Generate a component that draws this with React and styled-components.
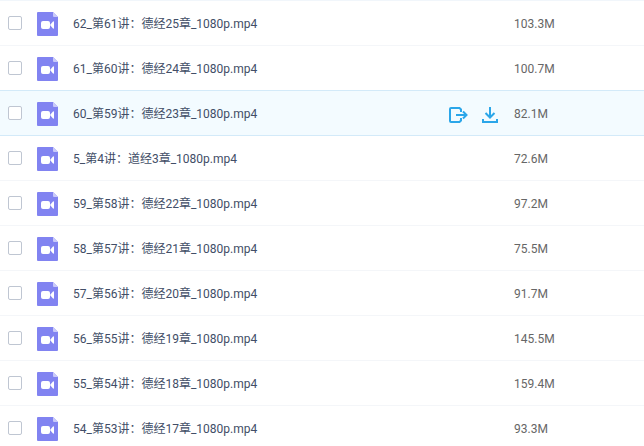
import React from 'react'
import styled, { createGlobalStyle } from 'styled-components'

const files = [
  { name: '62_第61讲：德经25章_1080p.mp4', size: '103.3M' },
  { name: '61_第60讲：德经24章_1080p.mp4', size: '100.7M' },
  { name: '60_第59讲：德经23章_1080p.mp4', size: '82.1M', active: true },
  { name: '5_第4讲：道经3章_1080p.mp4', size: '72.6M' },
  { name: '59_第58讲：德经22章_1080p.mp4', size: '97.2M' },
  { name: '58_第57讲：德经21章_1080p.mp4', size: '75.5M' },
  { name: '57_第56讲：德经20章_1080p.mp4', size: '91.7M' },
  { name: '56_第55讲：德经19章_1080p.mp4', size: '145.5M' },
  { name: '55_第54讲：德经18章_1080p.mp4', size: '159.4M' },
  { name: '54_第53讲：德经17章_1080p.mp4', size: '93.3M' },
]

const VideoIcon = () => (
  <svg width="21" height="24" viewBox="0 0 21 24" aria-hidden="true">
    <path d="M1 0H16l5 5v18a1 1 0 0 1-1 1H1a1 1 0 0 1-1-1V1a1 1 0 0 1 1-1z" fill="#8183f1" />
    <path d="M16 0l5 5h-4a1 1 0 0 1-1-1z" fill="#c9caf9" />
    <rect x="4" y="9" width="9" height="8" rx="2" fill="#fff" />
    <path d="M13 13l3-3.500q1-.5 1 .5v6q0 1-1 .5z" fill="#fff" />
  </svg>
)

const ShareIcon = () => (
  <svg width="19" height="16" viewBox="0 0 19 16" fill="none" stroke="#2ba6e9" strokeWidth="2" aria-hidden="true">
    <path d="M12 5V2.500L10.500 1H2a1 1 0 0 0-1 1v12a1 1 0 0 0 1 1h8.500l1.500-1.500V11" />
    <path d="M7 8h10M14 4.500L17.500 8 14 11.500" />
  </svg>
)

const DownloadIcon = () => (
  <svg width="16" height="16" viewBox="0 0 16 16" fill="none" stroke="#2ba6e9" strokeWidth="2" aria-hidden="true">
    <path d="M8 0v10M3.500 6L8 10.500 12.500 6M1 12v3h14v-3" />
  </svg>
)

const App = () => {
  return (
    <>
      <GlobalStyle />
      <FileTable>
        <tbody>
          {files.map((file) => (
            <FileRow key={file.name} $active={file.active}>
              <CheckCell>
                <Checkbox type="checkbox" aria-label={file.name} />
              </CheckCell>
              <NameCell>
                <NameWrap>
                  <VideoIcon />
                  <FileName href="#">{file.name}</FileName>
                  {file.active && (
                    <Actions>
                      <ActionButton aria-label="分享"><ShareIcon /></ActionButton>
                      <ActionButton aria-label="下载"><DownloadIcon /></ActionButton>
                    </Actions>
                  )}
                </NameWrap>
              </NameCell>
              <SizeCell>
                <SizeText>{file.size}</SizeText>
              </SizeCell>
            </FileRow>
          ))}
        </tbody>
      </FileTable>
    </>
  )
}

export default App

const GlobalStyle = createGlobalStyle`
  body {
    margin: 0;
    background: #fff;
    font-family: Roboto, "Noto Sans CJK SC", sans-serif;
    font-size: 12px;
    line-height: 20px;
    overflow-x: hidden;
  }
`
const FileTable = styled.table`
  width: 100%;
  table-layout: fixed;
  border-collapse: separate;
  border-spacing: 0;
  border-top: 1px solid #f1f6fb;
`
const FileRow = styled.tr`
  background: ${({ $active }) => ($active ? '#f3fbff' : '#fff')};

  td {
    box-sizing: border-box;
    height: 45px;
    padding: 0;
    vertical-align: middle;
    border-bottom: 1px solid ${({ $active }) => ($active ? '#d3eaf9' : '#f4f6f9')};
  }

  &:has(+ tr button) td {
    border-bottom-color: #d3eaf9;
  }
`
const CheckCell = styled.td`
  width: 37px;
`
const Checkbox = styled.input`
  appearance: none;
  display: block;
  box-sizing: border-box;
  width: 14px;
  height: 14px;
  margin: 0 0 0 8px;
  background: #fff;
  border: 1px solid #bfc6d2;
  border-radius: 2px;
`
const NameCell = styled.td`
  width: auto;
`
const NameWrap = styled.div`
  display: flex;
  align-items: center;
  padding-top: 2px;
`
const FileName = styled.a`
  margin-left: 15px;
  color: #424e67;
  text-decoration: none;
  white-space: nowrap;
`
const Actions = styled.div`
  display: flex;
  gap: 14px;
  margin-left: auto;
  padding: 2px 16px 0 0;
`
const ActionButton = styled.button`
  display: flex;
  padding: 0;
  border: 0;
  background: none;
  cursor: pointer;
`
const SizeCell = styled.td`
  width: 130px;
  color: #666;
`
const SizeText = styled.div`
  padding-top: 2px;
`
